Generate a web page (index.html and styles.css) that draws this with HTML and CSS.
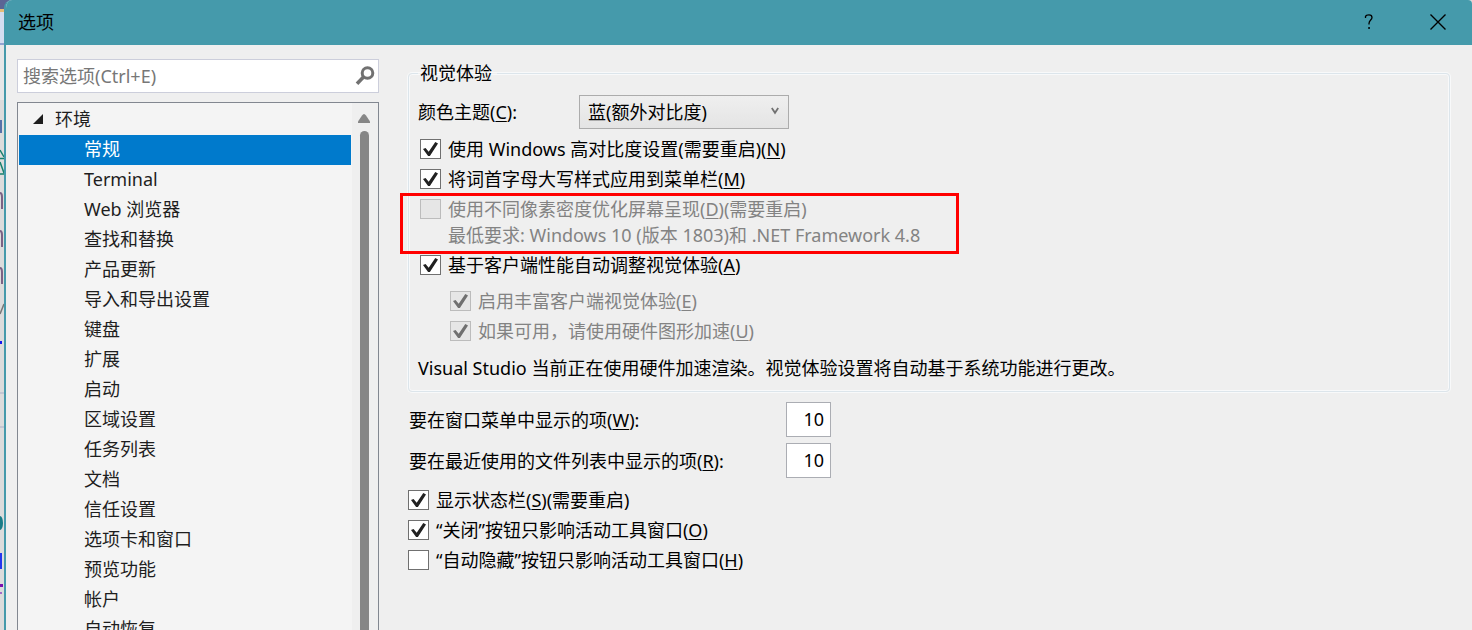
FILE: index.html
```html
<!DOCTYPE html>
<html lang="zh-CN">
<head>
<meta charset="utf-8">
<title>选项</title>
<link rel="stylesheet" href="styles.css">
</head>
<body>
<svg class="backdrop" width="16" height="630" viewBox="0 0 16 630" aria-hidden="true">
  <rect width="16" height="630" fill="#dcdcdc"/>
  <rect width="16" height="9" fill="#5b6595"/>
  <rect y="9" width="16" height="3" fill="#e6bd78"/>
  <rect y="12" width="16" height="31" fill="#d5ddf0"/>
  <rect y="43" width="16" height="2" fill="#91a3d0"/>
  <rect y="45" width="16" height="55" fill="#e6e7e8"/>
  <path d="M1 120v13" stroke="#5671a8" stroke-width="2"/>
  <path d="M0 150l4 7M0 158.500h4M0 162l4 11M0 174h4" stroke="#17806d" stroke-width="1.500" fill="none"/>
  <path d="M0 193q2 0 2 4v12M0 231q2 0 2 4v12M0 268q2 0 2 4v12" stroke="#7b6284" stroke-width="2" fill="none"/>
  <path d="M4 304l-4 10" stroke="#777" stroke-width="1.500"/>
  <rect y="341" width="2" height="3" fill="#1717ee"/>
  <path d="M0 393h4M0 427h4" stroke="#c4c6d2" stroke-width="2"/>
  <ellipse cx="0" cy="523" rx="3" ry="7" fill="#197c87"/>
  <rect y="553" width="2" height="16" fill="#2436ee"/>
  <rect y="584" width="3" height="3" fill="#7a10b0"/>
  <rect y="592" width="2" height="2" fill="#a46ac8"/>
</svg>
<main class="dialog">
  <header class="titlebar">
    <h1 class="title">选项</h1>
    <button class="title-button" type="button" aria-label="帮助">
      <svg width="16" height="16" viewBox="0 0 16 16"><path d="M4.500 4V2.500Q5 .8 8 .8q3 0 3 2.700c0 2.500-3 2.700-3 6v1" fill="none" stroke="#000" stroke-width="1.300"/><rect x="7.300" y="13" width="1.500" height="2" /></svg>
    </button>
    <button class="title-button" type="button" aria-label="关闭">
      <svg width="16" height="16" viewBox="0 0 16 16"><path d="M.5 .5l15 15M15.500 .5l-15 15" fill="none" stroke="#000" stroke-width="1.400"/></svg>
    </button>
  </header>
  <div class="content">
    <aside class="sidebar">
      <div class="search">
        <input class="search-input" type="text" placeholder="搜索选项(Ctrl+E)" aria-label="搜索选项">
        <button class="search-button" type="button" aria-label="搜索">
          <svg width="20" height="20" viewBox="0 0 20 20" fill="none" stroke="#717171"><circle cx="12.500" cy="7" r="5.300" stroke-width="3"/><path d="M8.500 11L2 17.800" stroke-width="3.600"/></svg>
        </button>
      </div>
      <nav class="tree" aria-label="选项类别">
        <div class="tree-list">
          <div class="node root"><svg width="10" height="10" viewBox="0 0 10 10"><path d="M10 0v10H0z" fill="#1e1e1e"/></svg>环境</div>
          <a class="node selected" href="#general">常规</a>
          <a class="node" href="#terminal">Terminal</a>
          <a class="node" href="#web">Web 浏览器</a>
          <a class="node" href="#find">查找和替换</a>
          <a class="node" href="#updates">产品更新</a>
          <a class="node" href="#import">导入和导出设置</a>
          <a class="node" href="#keyboard">键盘</a>
          <a class="node" href="#extensions">扩展</a>
          <a class="node" href="#startup">启动</a>
          <a class="node" href="#locale">区域设置</a>
          <a class="node" href="#tasks">任务列表</a>
          <a class="node" href="#documents">文档</a>
          <a class="node" href="#trust">信任设置</a>
          <a class="node" href="#tabs">选项卡和窗口</a>
          <a class="node" href="#preview">预览功能</a>
          <a class="node" href="#account">帐户</a>
          <a class="node" href="#recover">自动恢复</a>
        </div>
        <div class="scrollbar" aria-hidden="true">
          <svg width="12" height="10" viewBox="0 0 12 10"><path d="M6 0q1 0 2 1.500l4 6V9H0V7.500l4-6Q5 0 6 0z" fill="#868686"/></svg>
          <div class="thumb"></div>
        </div>
      </nav>
    </aside>
    <form class="page">
      <fieldset class="group">
        <legend class="legend">视觉体验</legend>
        <div class="theme-row">
          <label class="theme-label" for="theme">颜色主题(<u>C</u>):</label>
          <div class="combo">
            <select class="combo-select" id="theme"><option>蓝(额外对比度)</option></select>
            <svg class="combo-arrow" width="8" height="8" viewBox="0 0 8 8"><path d="M.8 1L4 5.800 7.200 1" fill="none" stroke="#717171" stroke-width="1.800"/></svg>
          </div>
        </div>
        <label class="check"><input class="box" type="checkbox" checked><span>使用 Windows 高对比度设置(需要重启)(<u>N</u>)</span></label>
        <label class="check"><input class="box" type="checkbox" checked><span>将词首字母大写样式应用到菜单栏(<u>M</u>)</span></label>
        <div class="density">
          <label class="check disabled"><input class="box" type="checkbox" disabled><span>使用不同像素密度优化屏幕呈现(<u>D</u>)(需要重启)</span></label>
          <p class="requirement">最低要求: Windows 10 (版本 1803)和 .NET Framework 4.8</p>
          <div class="highlight"></div>
        </div>
        <label class="check"><input class="box" type="checkbox" checked><span>基于客户端性能自动调整视觉体验(<u>A</u>)</span></label>
        <div class="nested">
          <label class="check disabled"><input class="box" type="checkbox" checked disabled><span>启用丰富客户端视觉体验(<u>E</u>)</span></label>
          <label class="check disabled"><input class="box" type="checkbox" checked disabled><span>如果可用，请使用硬件图形加速(<u>U</u>)</span></label>
        </div>
        <p class="status">Visual Studio 当前正在使用硬件加速渲染。视觉体验设置将自动基于系统功能进行更改。</p>
      </fieldset>
      <div class="counts">
        <label for="window-items">要在窗口菜单中显示的项(<u>W</u>):</label>
        <input class="count" id="window-items" type="text" value="10">
        <label for="recent-items">要在最近使用的文件列表中显示的项(<u>R</u>):</label>
        <input class="count" id="recent-items" type="text" value="10">
      </div>
      <label class="check tight"><input class="box" type="checkbox" checked><span>显示状态栏(<u>S</u>)(需要重启)</span></label>
      <label class="check tight"><input class="box" type="checkbox" checked><span>“关闭”按钮只影响活动工具窗口(<u>O</u>)</span></label>
      <label class="check tight"><input class="box" type="checkbox"><span>“自动隐藏”按钮只影响活动工具窗口(<u>H</u>)</span></label>
    </form>
  </div>
</main>
</body>
</html>
```
FILE: styles.css
```css
* {
  box-sizing: border-box;
}

body {
  margin: 0;
  height: 100vh;
  overflow: hidden;
  display: flex;
  background: #dcdcdc;
  color: #000;
  font: 18px/24px "Noto Sans", "Noto Sans CJK SC", sans-serif;
}

input,
select,
button {
  font: inherit;
  color: inherit;
}

p {
  margin: 0;
}

u {
  text-underline-offset: 2px;
  text-decoration-thickness: 1px;
}

.backdrop {
  flex: none;
  margin-right: -12px;
}

.dialog {
  position: relative;
  flex: 1;
  min-width: 0;
  display: flex;
  flex-direction: column;
  overflow: hidden;
  border-left: 2px solid #459aab;
  border-radius: 8px 4px 0 0;
  background: #efefef;
}

.titlebar {
  flex: none;
  display: flex;
  align-items: center;
  height: 45px;
  padding: 0 0 2px 12px;
  background: #459aab;
}

.title {
  flex: 1;
  margin: 0;
  font-size: 18px;
  font-weight: 400;
}

.title-button {
  width: 70px;
  height: 42px;
  margin-right: -1px;
  padding: 0;
  border: 0;
  background: none;
  display: grid;
  place-items: center;
}

.content {
  flex: 1;
  min-height: 0;
  display: flex;
  gap: 29px;
  padding: 14px 22px 0 11px;
}

.sidebar {
  flex: none;
  width: 362px;
  display: flex;
  flex-direction: column;
  gap: 9px;
}

.search {
  flex: none;
  display: flex;
  height: 34px;
  border: 1px solid #cccedb;
  background: #fff;
}

.search-input {
  flex: 1;
  min-width: 0;
  padding: 0 5px;
  border: 0;
  outline: 0;
  background: none;
}

.search-input::placeholder {
  color: #777;
  opacity: 1;
}

.search-button {
  width: 26px;
  padding: 0;
  border: 0;
  background: none;
  display: grid;
  place-items: center;
}

.tree {
  flex: 1;
  min-height: 0;
  display: flex;
  overflow: hidden;
  border: 1px solid #828790;
  border-bottom: 0;
  background: #f4f4f4;
  color: #1e1e1e;
}

.tree-list {
  flex: 1;
  padding: 2px 1px;
}

.node {
  display: block;
  padding: 0 0 2px 65px;
  color: inherit;
  line-height: 28px;
  text-decoration: none;
}

.root {
  display: flex;
  align-items: center;
  gap: 12px;
  padding-left: 14px;
}

.selected {
  background: #007acc;
  color: #fff;
}

.scrollbar {
  flex: none;
  width: 26px;
  display: flex;
  flex-direction: column;
  align-items: center;
  gap: 7px;
  padding: 11px 2px 0 0;
  background: #efefef;
}

.scrollbar svg {
  flex: none;
}

.thumb {
  flex: 1;
  width: 9px;
  border-radius: 5px 5px 0 0;
  background: #868686;
}

.page {
  flex: 1;
  min-width: 0;
}

.group {
  min-width: 0;
  margin: 2px 0 10px;
  padding: 10px 9px 11px;
  border: 1px solid #dce5eb;
  border-radius: 4px;
  box-shadow: 0 0 0 1px #f8f9fa, inset 0 0 0 1px #f8f9fa;
}

.legend {
  padding: 0 5px 0 2px;
}

.theme-row {
  display: flex;
  align-items: center;
  margin-bottom: 5px;
}

.theme-label {
  width: 161px;
}

.combo {
  position: relative;
  width: 210px;
}

.combo-select {
  display: block;
  width: 100%;
  height: 34px;
  padding: 0 8px;
  border: 1px solid #acacac;
  border-radius: 0;
  appearance: none;
  background: linear-gradient(#efefef, #e4e4e4);
}

.combo-arrow {
  position: absolute;
  top: 12px;
  right: 10px;
  pointer-events: none;
}

.check {
  display: flex;
  align-items: center;
  gap: 7px;
  width: fit-content;
  height: 30px;
  padding-left: 2px;
}

.tight {
  padding-left: 0;
}

.box {
  flex: none;
  display: grid;
  place-items: center;
  width: 21px;
  height: 20px;
  margin: 0;
  appearance: none;
  border: 1px solid #707070;
  background: #fff;
}

.box:checked::before {
  content: "";
  width: 15px;
  height: 14px;
  background: #212121;
  clip-path: polygon(0 50%, 17% 42%, 38% 70%, 82% 0, 100% 10%, 46% 100%, 34% 100%);
}

.box:disabled {
  border-color: #bcbcbc;
  background: #e6e6e6;
}

.box:disabled::before {
  background: #707070;
}

.disabled,
.requirement {
  color: #838383;
}

.density {
  position: relative;
  width: fit-content;
  padding-bottom: 4px;
}

.requirement {
  padding-left: 30px;
  line-height: 22px;
}

.highlight {
  position: absolute;
  inset: -1px -39px -4px -18px;
  border: 3px solid #f00;
  pointer-events: none;
}

.nested {
  padding: 6px 0 0 30px;
}

.status {
  padding-top: 10px;
}

.counts {
  display: grid;
  grid-template-columns: 377px 45px;
  gap: 6px 0;
  align-items: center;
  margin-bottom: 7px;
  padding-left: 1px;
}

.count {
  width: 45px;
  height: 35px;
  padding: 0 6px 2px;
  border: 1px solid #abadb3;
  outline: 0;
  background: #fff;
  text-align: right;
}
```
